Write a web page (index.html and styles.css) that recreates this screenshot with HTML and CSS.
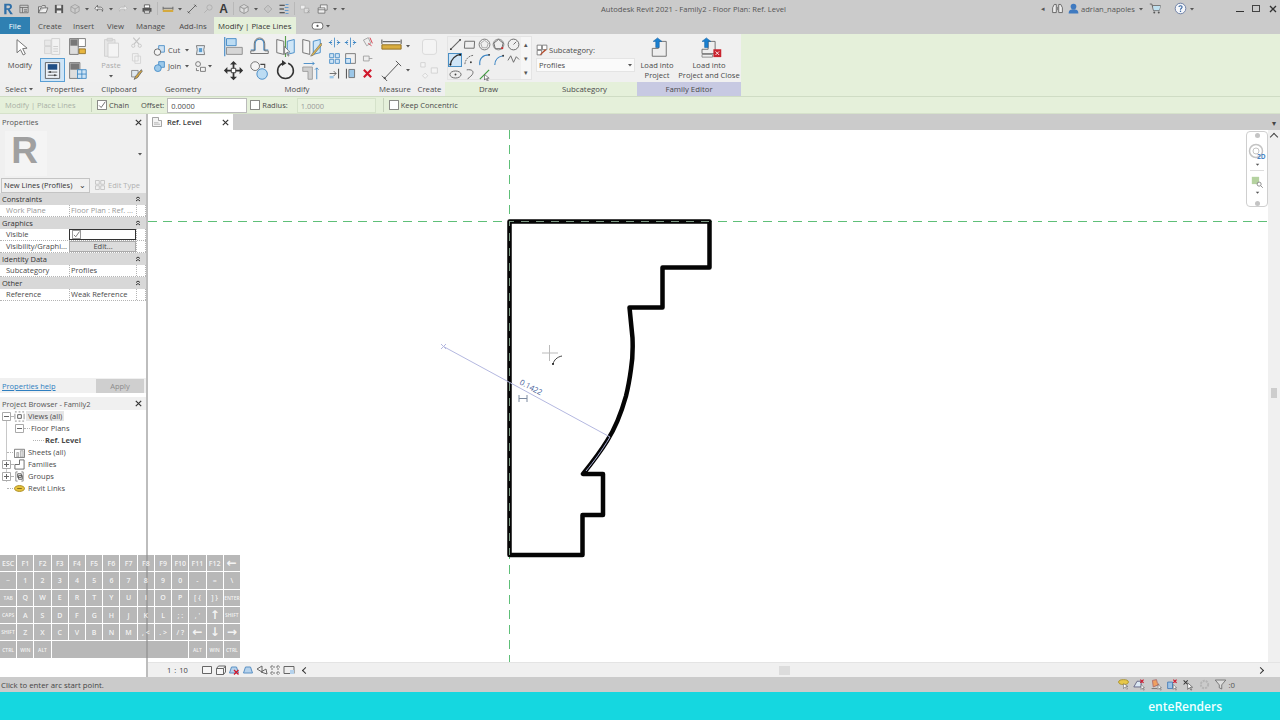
FILE: index.html
```html
<!DOCTYPE html>
<html lang="en">
<head>
<meta charset="utf-8">
<title>Autodesk Revit 2021 - Family2 - Floor Plan: Ref. Level</title>
<link rel="stylesheet" href="styles.css">
</head>
<body>
<svg class="sprite" aria-hidden="true">
  <symbol id="dd" viewBox="0 0 8 8"><path d="M2 3h4L4 5.500z" fill="#555"/></symbol>
  <symbol id="rlogo" viewBox="0 0 16 16"><path d="M3 1h6.500c5 0 5 7 .7 7.600L14.500 15h-3.400L7.500 9H6v6H3z M6 3.400V7h3c2.200 0 2.200-3.600 0-3.600z" fill="#2f6fa8" fill-rule="evenodd"/></symbol>
  <symbol id="info" viewBox="0 0 16 16"><path d="M2.500 3h11v10h-11z M2.500 6h11 M6 6v7 M8 9h4 M8 11h4" fill="none" stroke="#666"/></symbol>
  <symbol id="open" viewBox="0 0 16 16"><path d="M2 13V5h4l1-1.500h4V6 M2 13h10l2.500-6.500H5L2 13z" fill="#eee" stroke="#555"/></symbol>
  <symbol id="save" viewBox="0 0 16 16"><path d="M2.500 2.500h11v11h-11z" fill="#555"/><path d="M5 3h6v4H5z M5 10h6v3.500H5z" fill="#e8e8e8"/></symbol>
  <symbol id="cube" viewBox="0 0 16 16"><path d="M8 2l5.500 3v6L8 14l-5.500-3V5z M2.500 5L8 8l5.500-3 M8 8v6" fill="#ccc" stroke="#999"/></symbol>
  <symbol id="undo" viewBox="0 0 16 16"><path d="M6 3L2.500 7 6 10.500V8.200h4c2 0 2.500 1.300 2.500 3 1.500-3.500-.5-5.700-2.500-5.700H6z" fill="#f4f4f4" stroke="#555"/></symbol>
  <symbol id="redo" viewBox="0 0 16 16"><path d="M10 3l3.500 4-3.500 3.500V8.200H6c-2 0-2.500 1.300-2.500 3C2 7.700 4 5.500 6 5.500h4z" fill="#eee" stroke="#b5b5b5"/></symbol>
  <symbol id="print" viewBox="0 0 16 16"><path d="M4.500 2.500h7v4h-7z M4.500 10.500h7v3h-7z" fill="#fff" stroke="#444"/><path d="M2 6.500h12v5h-2.500v-2h-7v2H2z" fill="#555"/></symbol>
  <symbol id="measure" viewBox="0 0 16 16"><path d="M1.500 5v4 M14.500 5v4 M2 7h12" stroke="#444" fill="none"/><path d="M1 9h14v3H1z" fill="#d4a93e"/></symbol>
  <symbol id="dim" viewBox="0 0 16 16"><path d="M2.500 13.500l11-11" stroke="#444"/><path d="M2 11l3 3 M11 2l3 3" stroke="#444"/></symbol>
  <symbol id="tag" viewBox="0 0 16 16"><circle cx="10" cy="6" r="3.500" fill="none" stroke="#aaa"/><path d="M7.500 8.500L3 13" stroke="#aaa"/></symbol>
  <symbol id="threed" viewBox="0 0 16 16"><path d="M8 2l5.500 3v6L8 14l-5.500-3V5z M2.500 5L8 8l5.500-3 M8 8v6" fill="#dedede" stroke="#8a8a8a"/></symbol>
  <symbol id="section" viewBox="0 0 16 16"><path d="M8 3l5 5-5 5-5-5z" fill="none" stroke="#999"/><path d="M8 5.500v5" stroke="#bbb"/></symbol>
  <symbol id="thin" viewBox="0 0 16 16"><path d="M2 3h7 M2 8h6 M2 13h7" stroke="#333" stroke-width="1.400"/><path d="M10 2h4 M9 6h5 M9 10h5 M10 14h4" stroke="#5a96cf" stroke-width="1.200"/></symbol>
  <symbol id="closehid" viewBox="0 0 16 16"><path d="M2 3h6v5H2z" fill="#eee" stroke="#bbb"/><path d="M7 7h6v6H7z" fill="#ddd" stroke="#aaa"/><path d="M11 10l3 3m0-3l-3 3" stroke="#999"/></symbol>
  <symbol id="switch" viewBox="0 0 16 16"><path d="M4.500 2.500h9v7h-9z" fill="#f2f2f2" stroke="#666"/><path d="M1.500 6.500h9v7h-9z" fill="#eee" stroke="#666"/><path d="M1.500 9h9" stroke="#666"/></symbol>
  <symbol id="binoc" viewBox="0 0 16 16"><path d="M2 13V7l2-4h2.500v10z M14 13V7l-2-4H9.500v10z" fill="#eee" stroke="#555"/><path d="M6.500 6h3v4h-3z" fill="#888"/></symbol>
  <symbol id="user" viewBox="0 0 16 16"><circle cx="8" cy="5.500" r="3.500" fill="#3f7ac0"/><path d="M2 14c0-4 3-5 6-5s6 1 6 5z" fill="#3f7ac0"/></symbol>
  <symbol id="cart" viewBox="0 0 16 16"><path d="M1 2.500h2.500l2 8h7l1.500-6H4.200" fill="none" stroke="#555"/><path d="M5 5h9l-1.400 5H6z" fill="#bfe0ef"/><circle cx="6.500" cy="13" r="1.200" fill="#555"/><circle cx="12" cy="13" r="1.200" fill="#555"/></symbol>
  <symbol id="help" viewBox="0 0 16 16"><circle cx="8" cy="8" r="6.500" fill="#f4f6fa" stroke="#5a6f9a"/><path d="M6 6.200C6.200 4 10 4 10 6.200 10 7.800 8 7.600 8 9.500" fill="none" stroke="#2f5f9e" stroke-width="1.300"/><circle cx="8" cy="11.500" r=".9" fill="#2f5f9e"/></symbol>
  <symbol id="tabicon" viewBox="0 0 16 16"><rect x="1.500" y="4.500" width="13" height="8" rx="3" fill="#fff" stroke="#555"/><circle cx="8" cy="8.500" r="1.300" fill="#555"/></symbol>
  <symbol id="cursor" viewBox="0 0 24 24"><path d="M8 3v15l4-3.500 3 6 2.500-1.200-3-6 5-.5z" fill="#fff" stroke="#666"/></symbol>
  <symbol id="prop1" viewBox="0 0 24 24"><path d="M2 4h8v7H2z M2 12h8v9H2z" fill="#e8e8e8" stroke="#cfcfcf"/><path d="M11 2h10v20H11z" fill="#f2f2f2" stroke="#cbcbcb"/><path d="M13 12h6 M13 15h6 M13 18h6" stroke="#c6c6c6"/></symbol>
  <symbol id="prop2" viewBox="0 0 24 24"><path d="M2 2h11v20H2z" fill="#ddd" stroke="#666"/><path d="M13 2h9v10h-9z" fill="#fff" stroke="#666"/><path d="M3 3h9v8H3z" fill="#777"/><path d="M14 15h8v6h-8z" fill="#e8b63f" stroke="#8a6a20"/></symbol>
  <symbol id="prop3" viewBox="0 0 24 24"><path d="M3 2h18v20H3z" fill="#eef3f8" stroke="#444"/><path d="M6 4h12v7H6z" fill="#1f4f86"/><path d="M6 14h12 M6 18h12" stroke="#444"/><circle cx="9" cy="14" r="1.300" fill="#444"/><circle cx="15" cy="18" r="1.300" fill="#444"/></symbol>
  <symbol id="prop4" viewBox="0 0 24 24"><path d="M2 2h13v20H2z" fill="#ddd" stroke="#666"/><path d="M3 3h11v8H3z" fill="#777"/><path d="M12 11h11v11H12z" fill="#cfe4f5" stroke="#2f7fc0"/><path d="M17.500 11v11 M12 16.500h11" stroke="#2f7fc0"/></symbol>
  <symbol id="paste" viewBox="0 0 24 24"><path d="M4 3h12v19H4z" fill="#e6e6e6" stroke="#cfcfcf"/><path d="M8 7h12v16H8z" fill="#f4f4f4" stroke="#cfcfcf"/><path d="M7 1.500h6v3H7z" fill="#ddd" stroke="#cfcfcf"/></symbol>
  <symbol id="cut" viewBox="0 0 16 16"><path d="M4 2l7 8 M12 2l-7 8" stroke="#c4c4c4" stroke-width="1.500"/><circle cx="4" cy="12" r="2" fill="none" stroke="#c4c4c4"/><circle cx="12" cy="12" r="2" fill="none" stroke="#c4c4c4"/></symbol>
  <symbol id="copy" viewBox="0 0 16 16"><path d="M3 2h7v9H3z M6 5h7v9H6z" fill="#f2f2f2" stroke="#d0d0d0"/></symbol>
  <symbol id="match" viewBox="0 0 16 16"><path d="M2 3h8v8H2z" fill="#dfe8f0" stroke="#777"/><path d="M14 2L7 10l-2 4 4-2 6-8z" fill="#d9a83a" stroke="#666"/></symbol>
  <symbol id="gcut" viewBox="0 0 16 16"><path d="M7 2h7v8H7z" fill="#cfe2f2" stroke="#3e86c4"/><circle cx="5.500" cy="10" r="4" fill="#f4f4f4" stroke="#555"/></symbol>
  <symbol id="gjoin" viewBox="0 0 16 16"><path d="M7 2h7v7H7z" fill="#9cc9ea" stroke="#3e86c4"/><circle cx="6" cy="10" r="4.200" fill="#9cc9ea" stroke="#3e86c4"/></symbol>
  <symbol id="gshape" viewBox="0 0 16 16"><path d="M3 2h10l-1 5 1 6H3l1-6z" fill="#e2edf6" stroke="#666"/><path d="M6 5h4v5H6z" fill="#5d9ed0"/></symbol>
  <symbol id="gsplit" viewBox="0 0 16 16"><circle cx="5" cy="5" r="3" fill="none" stroke="#666"/><path d="M8 9h6v5H8z M3 10v3h3" fill="#f4f4f4" stroke="#666"/></symbol>
  <symbol id="align" viewBox="0 0 24 24"><path d="M2 1v22" stroke="#3e86c4" stroke-width="1.300"/><path d="M4 3h11v8H4z" fill="#bcdcf3" stroke="#3e86c4"/><path d="M4 13h18v8H4z" fill="#d6d6d6" stroke="#888"/></symbol>
  <symbol id="offset" viewBox="0 0 24 24"><path d="M2 16h5V9c0-7 10-7 10 0v7h5" fill="none" stroke="#3e86c4" stroke-width="1.200"/><path d="M2 20h20v-3h-4V9C18 0 6 0 6 9v8H2z" fill="none" stroke="#666"/></symbol>
  <symbol id="mirrorp" viewBox="0 0 24 24"><path d="M12 0v24" stroke="#5aa04a" stroke-width="1.300"/><path d="M2 4l8 2v15l-8-2z" fill="#f4f4f4" stroke="#666"/><path d="M22 4l-8 2v15l8-2z" fill="#cfe6f7" stroke="#3e86c4"/><path d="M11 12v9l2-2 2 4 1-.5-2-4h3z" fill="#fff" stroke="#333" stroke-width=".6"/></symbol>
  <symbol id="mirrord" viewBox="0 0 24 24"><path d="M2 4l8 2v15l-8-2z" fill="#f4f4f4" stroke="#666"/><path d="M22 4l-8 2v15l8-2z" fill="#cfe6f7" stroke="#3e86c4"/><path d="M23 8L13 20l-2 3 3-1 10-12z" fill="#e3b84a" stroke="#666" stroke-width=".7"/></symbol>
  <symbol id="move" viewBox="0 0 24 24"><path d="M12 1l4 4h-3v5h-2V5H8z M12 23l-4-4h3v-5h2v5h3z M1 12l4-4v3h5v2H5v3z M23 12l-4 4v-3h-5v-2h5V8z" fill="#333"/><path d="M9.500 9.500h5v5h-5z" fill="#fff" stroke="#333"/></symbol>
  <symbol id="copyb" viewBox="0 0 24 24"><circle cx="7" cy="7" r="5" fill="#f4f4f4" stroke="#666"/><circle cx="15" cy="16" r="6" fill="#bcdcf3" stroke="#3e86c4"/><path d="M13 5h5v4" fill="none" stroke="#444" stroke-width="1.200"/></symbol>
  <symbol id="rotate" viewBox="0 0 24 24"><path d="M15 3.700A9 9 0 1 1 9 3.700" fill="none" stroke="#333" stroke-width="1.800"/><path d="M8 0l5 3.800-5 3z" fill="#333"/></symbol>
  <symbol id="trim" viewBox="0 0 24 24"><path d="M2 8h11v14h-5V13H2z" fill="#cfcfcf" stroke="#999"/><path d="M3 4h12l-2-2 M15 4l-2 2 M18 22V9l-2 2 M18 9l2 2" fill="none" stroke="#3e86c4"/></symbol>
  <symbol id="split" viewBox="0 0 16 16"><path d="M1 8h4 M11 8h4" stroke="#3e86c4" stroke-width="1.300"/><path d="M5 5L2 8l3 3 M11 5l3 3-3 3 M8 2v12" fill="none" stroke="#3e86c4"/></symbol>
  <symbol id="gridb" viewBox="0 0 16 16"><path d="M2 2h5v5H2z M9 2h5v5H9z M2 9h5v5H2z M9 9h5v5H9z" fill="#cfe4f5" stroke="#3e86c4"/></symbol>
  <symbol id="scale" viewBox="0 0 16 16"><path d="M2 2h12v12H2z" fill="none" stroke="#666"/><path d="M2 8h6v6H2z" fill="#cfe4f5" stroke="#3e86c4"/></symbol>
  <symbol id="pin" viewBox="0 0 16 16"><path d="M3 5l6-3 3 7-5 3z" fill="#eee" stroke="#999"/><path d="M9 9l4 3 M11 2l3 7" stroke="#d02030"/></symbol>
  <symbol id="unpin" viewBox="0 0 16 16"><path d="M3 5h7v6H3z M10 8h4" fill="#eee" stroke="#999"/></symbol>
  <symbol id="xred" viewBox="0 0 16 16"><path d="M3.500 3.500l9 9m0-9l-9 9" stroke="#d0182c" stroke-width="2.600"/></symbol>
  <symbol id="extend" viewBox="0 0 16 16"><path d="M13 2v12" stroke="#555" stroke-width="1.300"/><path d="M2 8h8M7 5l3 3-3 3" fill="none" stroke="#555"/><path d="M2 11h5v3H2z" fill="#9cc7e8"/></symbol>
  <symbol id="extend2" viewBox="0 0 16 16"><path d="M3 2v12" stroke="#555" stroke-width="1.300"/><path d="M6 3h7v10H6z" fill="#9cc7e8" stroke="#666"/></symbol>
  <symbol id="ruler" viewBox="0 0 24 24"><path d="M1 4v5 M23 4v5 M2 6.500h20" stroke="#333" fill="none"/><path d="M1 10h22v5H1z" fill="#d9ad3f" stroke="#8c6a1f"/></symbol>
  <symbol id="aligned" viewBox="0 0 24 24"><path d="M4 21L20 4" stroke="#444"/><path d="M1 18l6 6 M17 1l6 6" stroke="#444"/><path d="M3 22l3-1-2-2z" fill="#444"/></symbol>
  <symbol id="crt1" viewBox="0 0 24 24"><rect x="4" y="4" width="16" height="17" rx="3" fill="#f4f4f4" stroke="#d6d6d6"/></symbol>
  <symbol id="crt2" viewBox="0 0 24 24"><path d="M2 3h5v5H2z M14 9h7v6h-7z M4 18l3-3 3 3-3 3z" fill="#f4f4f4" stroke="#d0d0d0"/></symbol>
  <symbol id="dline" viewBox="0 0 14 14"><path d="M2 12L12 2" stroke="#666" stroke-width="1.100"/><circle cx="2" cy="12" r="1" fill="#333"/><circle cx="12" cy="2" r="1" fill="#333"/></symbol>
  <symbol id="drect" viewBox="0 0 14 14"><path d="M2 3.500h10.500L12 11H1.500z" fill="none" stroke="#666"/></symbol>
  <symbol id="dpoly" viewBox="0 0 14 14"><circle cx="7" cy="7" r="5.800" fill="none" stroke="#777"/><path d="M7 2.500l4 3-1.500 5h-5L3 5.500z" fill="none" stroke="#888" stroke-width=".7"/></symbol>
  <symbol id="dpoly2" viewBox="0 0 14 14"><circle cx="7" cy="7" r="5.800" fill="none" stroke="#888"/><path d="M7 1.500l5 4-1.500 6h-7L2 5.500z" fill="none" stroke="#666"/><circle cx="11" cy="11" r="1.200" fill="#c33"/></symbol>
  <symbol id="dcirc" viewBox="0 0 14 14"><circle cx="7" cy="7" r="5.800" fill="none" stroke="#666"/><path d="M7 7l3-3" stroke="#666"/></symbol>
  <symbol id="darc1" viewBox="0 0 14 14"><path d="M1.500 12.500C2 7 7 2 12.500 1.500" fill="none" stroke="#333" stroke-width="1.200"/><circle cx="1.500" cy="12.500" r="1.100" fill="#111"/><circle cx="12" cy="2" r="1.100" fill="#111"/></symbol>
  <symbol id="darc2" viewBox="0 0 14 14"><path d="M2 12C2.500 7 6 3 11 2.500" fill="none" stroke="#666" stroke-dasharray="2 1"/><circle cx="8.500" cy="10" r="1" fill="#333"/></symbol>
  <symbol id="darc3" viewBox="0 0 14 14"><path d="M2 13C1 6 5 2 12 2" fill="none" stroke="#3e86c4" stroke-width="1.200"/><circle cx="12" cy="2" r="1" fill="#333"/></symbol>
  <symbol id="darc4" viewBox="0 0 14 14"><path d="M3 13C3 7 6 4 12 3" fill="none" stroke="#3e86c4" stroke-width="1.200"/><circle cx="12" cy="3" r="1" fill="#333"/></symbol>
  <symbol id="dspl" viewBox="0 0 14 14"><path d="M1 8l3-5 3 7 3-6 3 3" fill="none" stroke="#666"/></symbol>
  <symbol id="dell" viewBox="0 0 14 14"><ellipse cx="7" cy="7" rx="6" ry="3.800" fill="none" stroke="#666"/><circle cx="7" cy="7" r="1" fill="#444"/></symbol>
  <symbol id="dell2" viewBox="0 0 14 14"><path d="M4 2c6-1 8 2 6 5s-5 4-5 5" fill="none" stroke="#666"/></symbol>
  <symbol id="dpick" viewBox="0 0 14 14"><path d="M2 12L12 2" stroke="#3fa03f" stroke-width="1.300"/><path d="M7 7v6l1.500-1.500L10 14l1-.5-1.500-2.500H12z" fill="#fff" stroke="#333" stroke-width=".6"/></symbol>
  <symbol id="subcat" viewBox="0 0 16 16"><path d="M1.500 1.500h6v6h-6z M8.500 1.500h6v6h-6z M1.500 8.500h6v6h-6z" fill="#fff" stroke="#666"/><path d="M14 8L7 14l-2 1 1-2 6-6z" fill="#b54a2a"/></symbol>
  <symbol id="load" viewBox="0 0 24 24"><path d="M13 5h9v17H6V13h7z" fill="#eee" stroke="#666"/><path d="M7 5l5-4 5 4h-3v7h-4V5z" fill="#1a80d0" stroke="#0d5a9c" stroke-width=".6"/></symbol>
  <symbol id="loadc" viewBox="0 0 32 24"><path d="M15 5h8v14H8v-5h7z" fill="#eee" stroke="#666"/><path d="M8 5l5-4 5 4h-3v7h-4V5z" fill="#1a80d0" stroke="#0d5a9c" stroke-width=".6"/><path d="M8 20h12v3H8z" fill="#eee" stroke="#888"/><path d="M21 14h9v9h-9z" fill="#c9242f"/><path d="M23.500 16.500l4 4m0-4l-4 4" stroke="#fff"/></symbol>
  <symbol id="chk" viewBox="0 0 12 12"><path d="M.5.500h11v11H.5z" fill="#fff" stroke="#666"/><path d="M2.500 6.500l2.500 2.500 5-7" fill="none" stroke="#555"/></symbol>
  <symbol id="box" viewBox="0 0 12 12"><path d="M.5.500h11v11H.5z" fill="#fff" stroke="#666"/></symbol>
  <symbol id="xclose" viewBox="0 0 10 10"><path d="M2 2l6 6m0-6L2 8" stroke="#333" stroke-width="1.300"/></symbol>
  <symbol id="page" viewBox="0 0 16 16"><path d="M2 2h8v4h4v8H2z" fill="#f4f4f4" stroke="#888"/><path d="M4 9h6M4 11h8" stroke="#aaa"/></symbol>
  <symbol id="chev" viewBox="0 0 8 8"><path d="M2 3.500L4 2l2 1.500 M2 6L4 4.500 6 6" fill="none" stroke="#333"/></symbol>
  <symbol id="edittype" viewBox="0 0 16 16"><path d="M2 2h5v5H2z M9 2h5v5H9z M2 9h5v5H2z M9 9h5v5H9z" fill="none" stroke="#bbb"/></symbol>
  <symbol id="minus" viewBox="0 0 9 9"><path d="M.5.500h8v8h-8z" fill="#fff" stroke="#aaa"/><path d="M2 4.500h5" stroke="#666"/></symbol>
  <symbol id="plus" viewBox="0 0 9 9"><path d="M.5.500h8v8h-8z" fill="#fff" stroke="#aaa"/><path d="M2 4.500h5M4.500 2v5" stroke="#666"/></symbol>
  <symbol id="tviews" viewBox="0 0 12 12"><path d="M1 1h2M5 1h2M9 1h2M1 11h2M5 11h2M9 11h2M1 3v6M11 3v6" stroke="#888"/><path d="M4 4h4v4H4z" fill="#fff" stroke="#555"/></symbol>
  <symbol id="tsheet" viewBox="0 0 12 12"><path d="M.5 2.500h11v9H.5z" fill="#fff" stroke="#777"/><path d="M3 6h2v5H3z M7 4h3v7H7z" fill="#ddd" stroke="#888" stroke-width=".6"/></symbol>
  <symbol id="tfam" viewBox="0 0 12 12"><path d="M6 1h5v10H1V6h5z" fill="#fff" stroke="#666"/></symbol>
  <symbol id="tgrp" viewBox="0 0 12 12"><path d="M2 1v10M10 1v10M2 1h2M8 1h2M2 11h2M8 11h2" stroke="#888"/><path d="M4 3h4v4H4z M5 5h4v4H5z" fill="#fff" stroke="#555"/></symbol>
  <symbol id="tlink" viewBox="0 0 12 8"><ellipse cx="6" cy="4" rx="5.500" ry="3.200" fill="#e6c23d" stroke="#a88a20"/><path d="M3.500 4h5" stroke="#7a6318"/></symbol>
  <symbol id="vbox" viewBox="0 0 12 12"><path d="M1.500 2.500h9v7h-9z" fill="#f6f6f6" stroke="#666"/></symbol>
  <symbol id="vcube" viewBox="0 0 12 12"><path d="M1.500 4.500h7v6h-7z M1.500 4.500l2-2.500h7l-2 2.500 M8.500 10.500l2-2.500V2" fill="#f6f6f6" stroke="#666"/></symbol>
  <symbol id="vsun" viewBox="0 0 12 12"><path d="M1.500 9l2-6h5l2 6z" fill="#b5d2ec" stroke="#5a90c4"/><path d="M6 6l4.500 4.500m0-4.500L6 10.500" stroke="#d0182c" stroke-width="1.300"/></symbol>
  <symbol id="vshad" viewBox="0 0 12 12"><path d="M1.500 9l2-6h5l2 6z" fill="#b5d2ec" stroke="#5a90c4"/></symbol>
  <symbol id="vtemp" viewBox="0 0 12 12"><path d="M1 5l5-3v6z M5 8l5-3 1 5z" fill="none" stroke="#666"/></symbol>
  <symbol id="vcrop" viewBox="0 0 12 12"><path d="M1 3h10M1 9h10M3 1v10M9 1v10" stroke="#777" stroke-dasharray="2 1"/></symbol>
  <symbol id="vhide" viewBox="0 0 12 12"><path d="M1 2.500h10v7H1z" fill="#eee" stroke="#666"/><path d="M7 6h4v4H7z" fill="#b5d2ec"/></symbol>
  <symbol id="s1" viewBox="0 0 16 16"><ellipse cx="8" cy="5" rx="6" ry="3" fill="#e7c84a" stroke="#a58a1e"/><path d="M8 7v6l2-2 2 3 1-.6-2-3h2.500z" fill="#fff" stroke="#555" stroke-width=".6"/></symbol>
  <symbol id="s2" viewBox="0 0 16 16"><path d="M1 11l4-7h5v7z" fill="#dbe8f4" stroke="#557"/><path d="M9 2l4 4m0-4L9 6" stroke="#d0182c" stroke-width="1.500"/><path d="M10 8v6l1.500-1.500 1.500 2.500.8-.4-1.500-2.500H14z" fill="#fff" stroke="#333" stroke-width=".5"/></symbol>
  <symbol id="s3" viewBox="0 0 16 16"><path d="M3 3l5-1 1 4 2 2-7 3z" fill="#f0a060" stroke="#a66"/><path d="M2 13h7" stroke="#666"/><path d="M10 8v6l1.500-1.500 1.500 2.500.8-.4-1.500-2.500H14z" fill="#fff" stroke="#333" stroke-width=".5"/></symbol>
  <symbol id="s4" viewBox="0 0 16 16"><path d="M2 5h6v8H2z" fill="#9cc2e6" stroke="#3d78b5"/><path d="M9 2l4 4m0-4L9 6" stroke="#d0182c" stroke-width="1.500"/><path d="M9 8v6l1.500-1.500 1.500 2.500.8-.4-1.500-2.500H13z" fill="#fff" stroke="#333" stroke-width=".5"/></symbol>
  <symbol id="s5" viewBox="0 0 16 16"><path d="M2 3l5 5m0-5L2 8" stroke="#333" stroke-width="1.300"/><path d="M7 6v8l2-2 2 3 1-.6-2-3h3z" fill="#fff" stroke="#333" stroke-width=".7"/></symbol>
  <symbol id="s6" viewBox="0 0 16 16"><circle cx="8" cy="8" r="4.500" fill="none" stroke="#b5b5b5" stroke-width="2.500" stroke-dasharray="2.500 1.200"/></symbol>
  <symbol id="s7" viewBox="0 0 16 16"><path d="M1.500 2.500h13l-5 6v5l-3-1.500v-3.500z" fill="#ddd" stroke="#666"/></symbol>
  <symbol id="wheel" viewBox="0 0 18 18"><circle cx="8" cy="8" r="6.500" fill="none" stroke="#c4c4c4" stroke-width="1.500"/><circle cx="8" cy="8" r="3" fill="none" stroke="#c4c4c4"/><text x="9" y="16" class="navtxt">2D</text></symbol>
  <symbol id="zoomr" viewBox="0 0 16 16"><path d="M1 1h9v9H1z" fill="#b5d2a0"/><circle cx="10" cy="10" r="2.500" fill="#fff" stroke="#777"/><path d="M12 12l2.500 2.500" stroke="#777"/></symbol>
</svg>

<div class="app">
  <header class="titlebar">
    <div class="qat">
      <svg class="q"><use href="#rlogo"/></svg><svg class="q"><use href="#info"/></svg>
      <span class="qs"></span>
      <svg class="q"><use href="#open"/></svg><svg class="q"><use href="#save"/></svg><svg class="q"><use href="#cube"/></svg><svg class="qd"><use href="#dd"/></svg>
      <svg class="q"><use href="#undo"/></svg><svg class="qd"><use href="#dd"/></svg><svg class="q"><use href="#redo"/></svg><svg class="qd"><use href="#dd"/></svg>
      <svg class="q"><use href="#print"/></svg><span class="qsep"></span>
      <svg class="q"><use href="#measure"/></svg><svg class="qd"><use href="#dd"/></svg><svg class="q"><use href="#dim"/></svg><svg class="q"><use href="#tag"/></svg>
      <span class="qa">A</span><span class="qsep"></span>
      <svg class="q"><use href="#threed"/></svg><svg class="qd"><use href="#dd"/></svg><svg class="q"><use href="#section"/></svg><svg class="q"><use href="#thin"/></svg><span class="qsep"></span>
      <svg class="q"><use href="#closehid"/></svg><span class="qs2"></span><svg class="q"><use href="#switch"/></svg><svg class="qd"><use href="#dd"/></svg><svg class="qd"><use href="#dd"/></svg>
    </div>
    <div class="apptitle">Autodesk Revit 2021 - Family2 - Floor Plan: Ref. Level</div>
    <div class="account">
      <span class="tri">◂</span>
      <svg class="a14"><use href="#binoc"/></svg>
      <svg class="a14"><use href="#user"/></svg>
      <span class="uname">adrian_napoles</span>
      <svg class="qd"><use href="#dd"/></svg>
      <svg class="a14 cartgap"><use href="#cart"/></svg>
      <svg class="a14 helpgap"><use href="#help"/></svg>
      <svg class="qd"><use href="#dd"/></svg>
      <div class="winbtns">
        <span class="wb wmin"></span>
        <span class="wb wrest"></span>
        <svg class="wx"><use href="#xclose"/></svg>
      </div>
    </div>
  </header>

  <nav class="tabs">
    <span class="tab file">File</span>
    <span class="tab t-create">Create</span>
    <span class="tab t-insert">Insert</span>
    <span class="tab t-view">View</span>
    <span class="tab t-manage">Manage</span>
    <span class="tab t-addins">Add-Ins</span>
    <span class="tab active">Modify | Place Lines</span>
    <svg class="tabctl"><use href="#tabicon"/></svg><svg class="qd"><use href="#dd"/></svg>
  </nav>

  <section class="ribbon">
    <div class="panel p-select">
      <div class="pbody colc bigcol"><svg class="i24"><use href="#cursor"/></svg><span class="rt">Modify</span></div>
      <div class="plabel">Select <svg class="qd"><use href="#dd"/></svg></div>
    </div>
    <div class="panel p-props">
      <div class="pbody grid22">
        <svg class="i22"><use href="#prop1"/></svg><svg class="i22"><use href="#prop2"/></svg>
        <span class="activeicon"><svg class="i22"><use href="#prop3"/></svg></span><svg class="i22"><use href="#prop4"/></svg>
      </div>
      <div class="plabel">Properties</div>
    </div>
    <div class="panel p-clip">
      <div class="pbody cliprow">
        <div class="colc pastecol bigcol"><svg class="i24"><use href="#paste"/></svg><span class="rt dis">Paste</span><svg class="qd"><use href="#dd"/></svg></div>
        <div class="smallcol"><svg class="i14"><use href="#cut"/></svg><svg class="i14"><use href="#copy"/></svg><svg class="i14"><use href="#match"/></svg></div>
      </div>
      <div class="plabel">Clipboard</div>
    </div>
    <div class="panel p-geom">
      <div class="pbody geomrows">
        <div class="geomrow"><svg class="i14"><use href="#gcut"/></svg><span class="rt gl">Cut</span><svg class="qd"><use href="#dd"/></svg><svg class="i14"><use href="#gshape"/></svg></div>
        <div class="geomrow"><svg class="i14"><use href="#gjoin"/></svg><span class="rt gl">Join</span><svg class="qd"><use href="#dd"/></svg><svg class="i14"><use href="#gsplit"/></svg><svg class="qd"><use href="#dd"/></svg></div>
      </div>
      <div class="plabel">Geometry</div>
    </div>
    <div class="panel p-modify">
      <div class="pbody modrow">
        <div class="modbig">
          <svg class="i24"><use href="#align"/></svg><svg class="i24"><use href="#offset"/></svg><svg class="i24"><use href="#mirrorp"/></svg><svg class="i24"><use href="#mirrord"/></svg>
          <svg class="i24"><use href="#move"/></svg><svg class="i24"><use href="#copyb"/></svg><svg class="i24"><use href="#rotate"/></svg><svg class="i24"><use href="#trim"/></svg>
        </div>
        <div class="modsmall">
          <svg class="i14"><use href="#split"/></svg><svg class="i14"><use href="#split"/></svg><svg class="i14"><use href="#pin"/></svg>
          <svg class="i14"><use href="#gridb"/></svg><svg class="i14"><use href="#scale"/></svg><svg class="i14"><use href="#unpin"/></svg>
          <svg class="i14"><use href="#extend"/></svg><svg class="i14"><use href="#extend2"/></svg><svg class="i14"><use href="#xred"/></svg>
        </div>
      </div>
      <div class="plabel">Modify</div>
    </div>
    <div class="panel p-measure">
      <div class="pbody measgrid"><svg class="i24"><use href="#ruler"/></svg><svg class="qd"><use href="#dd"/></svg><svg class="i24"><use href="#aligned"/></svg><svg class="qd"><use href="#dd"/></svg></div>
      <div class="plabel">Measure</div>
    </div>
    <div class="panel p-create">
      <div class="pbody colc creategap"><svg class="i24"><use href="#crt1"/></svg><svg class="i24"><use href="#crt2"/></svg></div>
      <div class="plabel">Create</div>
    </div>
    <div class="panel p-draw">
      <div class="pbody drawbody">
        <div class="drawbox">
          <div class="drawgrid">
            <svg class="i13"><use href="#dline"/></svg><svg class="i13"><use href="#drect"/></svg><svg class="i13"><use href="#dpoly"/></svg><svg class="i13"><use href="#dpoly2"/></svg><svg class="i13"><use href="#dcirc"/></svg>
            <span class="drawon"><svg class="i13"><use href="#darc1"/></svg></span><svg class="i13"><use href="#darc2"/></svg><svg class="i13"><use href="#darc3"/></svg><svg class="i13"><use href="#darc4"/></svg><svg class="i13"><use href="#dspl"/></svg>
            <svg class="i13"><use href="#dell"/></svg><svg class="i13"><use href="#dell2"/></svg><svg class="i13"><use href="#dpick"/></svg>
          </div>
          <div class="drawscroll"><span>▴</span><span>▾</span><span>▾</span></div>
        </div>
      </div>
      <div class="plabel green">Draw</div>
    </div>
    <div class="panel p-sub">
      <div class="pbody subbody">
        <div class="subhead"><svg class="i12"><use href="#subcat"/></svg><span class="rt">Subcategory:</span></div>
        <div class="subsel"><span>Profiles</span><svg class="qd"><use href="#dd"/></svg></div>
      </div>
      <div class="plabel green">Subcategory</div>
    </div>
    <div class="panel p-fam">
      <div class="pbody fambody">
        <div class="loadbtn lb1"><svg class="i24"><use href="#load"/></svg><span class="rt">Load into<br>Project</span></div>
        <div class="loadbtn lb2"><svg class="i32"><use href="#loadc"/></svg><span class="rt">Load into<br>Project and Close</span></div>
      </div>
      <div class="plabel lilac">Family Editor</div>
    </div>
  </section>

  <section class="options">
    <span class="opt-mode">Modify | Place Lines</span>
    <span class="opt-sep"></span>
    <svg class="ck"><use href="#chk"/></svg><span class="opt-lbl">Chain</span>
    <span class="opt-lbl off">Offset:</span>
    <span class="opt-input">0.0000</span>
    <svg class="ck radck"><use href="#box"/></svg><span class="opt-lbl">Radius:</span>
    <span class="opt-input2">1.0000</span>
    <span class="opt-sep sep2"></span>
    <svg class="ck"><use href="#box"/></svg><span class="opt-lbl">Keep Concentric</span>
  </section>

  <main class="work">
    <aside class="side">
      <div class="phead"><span>Properties</span><svg class="xbtn"><use href="#xclose"/></svg></div>
      <div class="preview"><div class="thumb"><span class="bigr">R</span></div><svg class="qd"><use href="#dd"/></svg></div>
      <div class="typerow">
        <div class="typesel"><span>New Lines (Profiles)</span><span class="carets">⌄</span></div>
        <div class="edittype"><svg class="i12"><use href="#edittype"/></svg><span>Edit Type</span></div>
      </div>
      <div class="ptable">
        <div class="psec"><span>Constraints</span><svg class="i8"><use href="#chev"/></svg></div>
        <div class="prow"><span class="k dimk">Work Plane</span><span class="v dimv">Floor Plan : Ref. ...</span><span class="e"></span></div>
        <div class="psec"><span>Graphics</span><svg class="i8"><use href="#chev"/></svg></div>
        <div class="prow"><span class="k">Visible</span><span class="v focus"><svg class="ck0"><use href="#chk"/></svg></span><span class="e"></span></div>
        <div class="prow"><span class="k">Visibility/Graphi...</span><span class="v editbtn">Edit...</span><span class="e"></span></div>
        <div class="psec"><span>Identity Data</span><svg class="i8"><use href="#chev"/></svg></div>
        <div class="prow"><span class="k">Subcategory</span><span class="v">Profiles</span><span class="e"></span></div>
        <div class="psec"><span>Other</span><svg class="i8"><use href="#chev"/></svg></div>
        <div class="prow"><span class="k">Reference</span><span class="v">Weak Reference</span><span class="e"></span></div>
      </div>
      <div class="pfoot"><a class="phelp">Properties help</a><span class="apply">Apply</span></div>
      <div class="phead bhead"><span>Project Browser - Family2</span><svg class="xbtn"><use href="#xclose"/></svg></div>
      <ul class="tree">
        <li class="l0"><svg class="tg"><use href="#minus"/></svg><i class="dash"></i><svg class="ti"><use href="#tviews"/></svg><span class="sel">Views (all)</span></li>
        <li class="l1"><svg class="tg"><use href="#minus"/></svg><i class="dash d2"></i><span>Floor Plans</span></li>
        <li class="l2"><i class="dash d3"></i><b>Ref. Level</b></li>
        <li class="l0 nog"><i class="dash d4"></i><svg class="ti"><use href="#tsheet"/></svg><span>Sheets (all)</span></li>
        <li class="l0"><svg class="tg"><use href="#plus"/></svg><i class="dash"></i><svg class="ti"><use href="#tfam"/></svg><span>Families</span></li>
        <li class="l0"><svg class="tg"><use href="#plus"/></svg><i class="dash"></i><svg class="ti"><use href="#tgrp"/></svg><span>Groups</span></li>
        <li class="l0 nog"><i class="dash d4"></i><svg class="ti"><use href="#tlink"/></svg><span>Revit Links</span></li>
      </ul>
    </aside>

    <div class="viewcol">
      <div class="viewtabs">
        <div class="vtab"><svg class="i12"><use href="#page"/></svg><span>Ref. Level</span><svg class="xbtn"><use href="#xclose"/></svg></div>
        <span class="vtabmenu">▾</span>
      </div>
      <div class="canvasrow">
        <div class="canvas">
          <svg class="drawing" viewBox="148 130 1120 532" aria-label="Floor plan drawing">
            <path d="M148 221.500H1268" class="refline"/>
            <path d="M509.500 130V664" class="refline"/>
            <path class="profile" d="M509.500 221.500H709.500V267.500H662.500V307.500H629.500L632.500 338C633 350 632.500 360 631 369C629.500 380 628 388 626 396C621 414 616 427 607 441C599 454 591 464 583 474H603V515H582.500V555H509.500Z"/>
            <path d="M509.500 221V555M509 221.500H710" class="refover"/>
            <path d="M610 437C601 452 594 461 586 471" class="hl"/>
            <path d="M443.500 346.500L610 437" class="con"/>
            <path d="M441 344l5 5m0-5l-5 5" class="con"/>
            <text x="519" y="384" class="dimtxt" transform="rotate(28 519 384)">0.1422</text>
            <path d="M519 395v7M527 395v7M519 398.500h8" class="dimi"/>
            <path d="M549.500 345v16M542 353h16" class="cross"/>
            <path d="M553 364C554 360 557 357 562 356" class="mini"/>
            <circle cx="553" cy="364" r="1" fill="#111"/>
          </svg>
          <div class="navbar">
            <span class="navx"></span>
            <svg class="wheelicon"><use href="#wheel"/></svg>
            <svg class="qd"><use href="#dd"/></svg>
            <span class="navline"></span>
            <svg class="i14"><use href="#zoomr"/></svg>
            <svg class="qd"><use href="#dd"/></svg>
            <span class="navx nb"></span>
          </div>
        </div>
        <div class="vscroll"><span class="vup"></span><span class="vthumb"></span></div>
      </div>
      <div class="viewbar">
        <span class="scale">1 : 10</span>
        <svg class="v12"><use href="#vbox"/></svg><svg class="v12"><use href="#vcube"/></svg><svg class="v12"><use href="#vsun"/></svg><svg class="v12"><use href="#vshad"/></svg><svg class="v12"><use href="#vtemp"/></svg><svg class="v12"><use href="#vcrop"/></svg><svg class="v12"><use href="#vhide"/></svg>
        <span class="chevl"></span>
        <span class="hthumb"></span>
        <span class="chevr"></span>
      </div>
    </div>
  </main>

  <footer class="status">
    <span>Click to enter arc start point.</span>
    <div class="statusicons">
      <svg class="s14"><use href="#s1"/></svg><svg class="s14"><use href="#s2"/></svg><svg class="s14"><use href="#s3"/></svg><svg class="s14"><use href="#s4"/></svg><svg class="s14"><use href="#s5"/></svg><svg class="s14"><use href="#s6"/></svg><svg class="s14"><use href="#s7"/></svg><span class="fcount">:0</span>
    </div>
  </footer>
  <div class="brand"><span>enteRenders</span></div>

  <div class="keyboard">
    <span>ESC</span><span>F1</span><span>F2</span><span>F3</span><span>F4</span><span>F5</span><span>F6</span><span>F7</span><span>F8</span><span>F9</span><span>F10</span><span>F11</span><span>F12</span><span class="big">←</span>
    <span>~</span><span>1</span><span>2</span><span>3</span><span>4</span><span>5</span><span>6</span><span>7</span><span>8</span><span>9</span><span>0</span><span>-</span><span>=</span><span>\</span>
    <span class="tiny">TAB</span><span>Q</span><span>W</span><span>E</span><span>R</span><span>T</span><span>Y</span><span>U</span><span>I</span><span>O</span><span>P</span><span>[ {</span><span>] }</span><span class="tiny">ENTER</span>
    <span class="tiny">CAPS</span><span>A</span><span>S</span><span>D</span><span>F</span><span>G</span><span>H</span><span>J</span><span>K</span><span>L</span><span>; :</span><span>, '</span><span class="big">↑</span><span class="tiny">SHIFT</span>
    <span class="tiny">SHIFT</span><span>Z</span><span>X</span><span>C</span><span>V</span><span>B</span><span>N</span><span>M</span><span>, &lt;</span><span>. &gt;</span><span>/ ?</span><span class="big">←</span><span class="big">↓</span><span class="big">→</span>
    <span class="tiny">CTRL</span><span class="tiny">WIN</span><span class="tiny">ALT</span><span class="space"></span><span class="tiny">ALT</span><span class="tiny">WIN</span><span class="tiny">CTRL</span>
  </div>
</div>
</body>
</html>
```
FILE: styles.css
```css
* { box-sizing: border-box; }
html, body { margin: 0; padding: 0; }
body { width: 1280px; height: 720px; overflow: hidden; font-family: "Open Sans", "Liberation Sans", sans-serif; font-size: 7.5px; color: #4a4a4a; background: #fff; }
.sprite { display: none; }
svg { display: block; flex: none; }
.app { position: relative; width: 1280px; height: 720px; display: flex; flex-direction: column; }

/* title bar */
.titlebar { height: 17px; background: #cbcbcb; display: flex; align-items: center; }
.qat { display: flex; align-items: center; width: 347px; }
.q { width: 12px; height: 12px; margin: 0 2px; }
.qd { width: 8px; height: 8px; }
.qs { width: 3px; }
.qs2 { width: 2px; }
.qsep { width: 1px; height: 13px; margin: 0 2px; background: #b8b8b8; }
.qa { width: 16px; text-align: center; font: bold 12px "Liberation Sans", sans-serif; color: #3a3a3a; }
.apptitle { margin-left: 254px; font-size: 7.6px; color: #555; white-space: nowrap; }
.account { margin-left: auto; display: flex; align-items: center; color: #555; }
.tri { width: 8px; font-size: 7px; margin-left: 2px; }
.a14 { width: 13px; height: 13px; margin: 0 1.500px; }
.uname { margin-left: 0; width: 56px; font-size: 7.6px; }
.cartgap { margin-left: 4px; }
.helpgap { margin-left: 10px; }
.winbtns { display: flex; align-items: center; gap: 8px; margin-left: 40px; width: 44px; }
.wb { display: block; width: 8px; height: 7px; }
.wmin { border-bottom: 1.500px solid #333; }
.wrest { border: 1px solid #444; }
.wx { width: 10px; height: 10px; }

/* tabs */
.tabs { height: 17px; background: #cbcbcb; display: flex; align-items: stretch; font-size: 7.8px; }
.tab { display: flex; align-items: center; color: #4a4a4a; }
.file { width: 30px; justify-content: center; background: #2f80b2; color: #fff; }
.t-create { margin-left: 8px; }
.t-insert { margin-left: 11px; }
.t-view { margin-left: 13px; }
.t-manage { margin-left: 12px; }
.t-addins { margin-left: 14px; }
.active { margin-left: 7px; width: 82px; justify-content: center; background: #e5f0da; color: #333; }
.tabctl { width: 13px; height: 15px; margin-left: 15px; align-self: center; }
.tabs .qd { align-self: center; }

/* ribbon */
.ribbon { height: 63px; background: #e5f0da; display: flex; border-bottom: 1px solid #cfdcc4; }
.panel { display: flex; flex-direction: column; background: #f0f0f0; }
.pbody { height: 48px; }
.plabel { height: 14px; display: flex; align-items: center; justify-content: center; background: #efefef; color: #4a4a4a; font-size: 7.8px; white-space: nowrap; }
.plabel.green { background: #e5f0da; }
.plabel.lilac { background: #c7c9e2; }
.rt { font-size: 7.6px; line-height: 10px; color: #4a4a4a; text-align: center; white-space: nowrap; }
.dis { color: #aaa; }
.colc { display: flex; flex-direction: column; align-items: center; }
.bigcol { padding-top: 3px; gap: 2px; }
.i24 { width: 21px; height: 21px; }
.i22 { width: 19px; height: 19px; }
.i14 { width: 13px; height: 13px; }
.i13 { width: 13px; height: 13px; }
.i12 { width: 12px; height: 12px; }
.i8 { width: 8px; height: 8px; }
.i32 { width: 28px; height: 21px; }
.p-select { width: 40px; }
.p-props { width: 50px; }
.grid22 { display: grid; grid-template-columns: 25px 25px; grid-template-rows: 24px 24px; place-items: center; }
.activeicon { width: 25px; height: 24px; display: flex; align-items: center; justify-content: center; background: #cfe5f7; border: 1px solid #5a9fd4; }
.p-clip { width: 58px; }
.cliprow { display: flex; padding-left: 8px; }
.pastecol { width: 26px; }
.smallcol { margin-left: 4px; width: 16px; display: flex; flex-direction: column; align-items: center; padding-top: 2px; gap: 3px; }
.p-geom { width: 70px; }
.geomrows { display: flex; flex-direction: column; gap: 2px; padding: 9px 0 0 5px; }
.geomrow { display: flex; align-items: center; height: 14px; }
.gl { width: 16px; margin-left: 2px; text-align: left; }
.geomrow .qd { margin-right: 3px; margin-left: -1px; }
.p-modify { width: 158px; }
.modrow { display: flex; padding-left: 2px; }
.modbig { display: grid; grid-template-columns: repeat(4, 26px); grid-template-rows: 24px 24px; place-items: center; }
.modsmall { margin-left: 2px; display: grid; grid-template-columns: repeat(3, 16.500px); grid-template-rows: repeat(3, 15.500px); place-items: center; padding-top: 1px; }
.p-measure { width: 38px; }
.measgrid { display: grid; grid-template-columns: 26px 8px; grid-template-rows: 24px 24px; place-items: center; padding-left: 2px; }
.p-create { width: 31px; }
.creategap { padding-top: 2px; gap: 3px; }
.p-draw { width: 87px; }
.drawbody { padding: 2px 0 2px 2px; }
.drawbox { height: 44px; display: flex; background: #efefef; border: 1px solid #e4e4e4; }
.drawgrid { width: 73px; display: grid; grid-template-columns: repeat(5, 14.500px); grid-template-rows: repeat(3, 15px); place-items: center; }
.drawon { width: 14px; height: 14px; display: flex; align-items: center; justify-content: center; background: #cfe5f7; border: 1px solid #4a8fc4; }
.drawscroll { flex: 1; display: grid; grid-template-rows: repeat(3, 1fr); place-items: center; font-size: 7px; background: #f6f6f6; color: #555; }
.p-sub { width: 105px; }
.subbody { padding: 9px 1px 0 4px; }
.subhead { display: flex; align-items: center; gap: 1px; height: 14px; }
.subsel { margin-top: 1px; width: 99px; height: 14px; display: flex; align-items: center; justify-content: space-between; padding-left: 2px; background: #fafafa; border: 1px solid #e4e4e4; color: #4a4a4a; }
.p-fam { width: 104px; }
.fambody { display: flex; padding-top: 3px; }
.loadbtn { display: flex; flex-direction: column; align-items: center; gap: 2px; }
.lb1 { width: 40px; }
.lb2 { width: 64px; }

/* options bar */
.options { height: 17px; background: #e5f0da; display: flex; align-items: center; border-bottom: 1px solid #d6e2cb; color: #4a4a4a; }
.opt-mode { width: 91px; padding-left: 5px; color: #aab0a6; white-space: nowrap; }
.opt-sep { width: 1px; height: 14px; background: #c6d2bc; margin-right: 5px; }
.sep2 { margin-left: 7px; }
.ck { width: 10px; height: 10px; margin-right: 2px; }
.off { margin-left: 12px; }
.opt-lbl { white-space: nowrap; }
.opt-input { width: 80px; height: 15px; margin-left: 3px; padding-left: 3px; line-height: 14px; background: #fff; border: 1px solid #bbb; color: #4a4a4a; }
.radck { margin-left: 3px; }
.opt-input2 { width: 79px; height: 15px; margin-left: 9px; padding-left: 3px; line-height: 14px; background: #e8f2de; border: 1px solid #d5e2ca; color: #999; }

/* workspace */
.work { height: 563px; display: flex; }
.side { width: 148px; display: flex; flex-direction: column; background: #fff; border-right: 2px solid #bdbdbd; }
.phead { height: 16px; flex: none; display: flex; align-items: center; justify-content: space-between; padding: 0 3px 0 2px; background: #f0f0f0; color: #555; }
.xbtn { width: 9px; height: 9px; }
.preview { height: 47px; display: flex; align-items: center; justify-content: space-between; padding: 0 2px 0 5px; background: #f0f0f0; }
.thumb { width: 42px; height: 45px; display: flex; justify-content: center; background: #f4f4f4; overflow: hidden; }
.bigr { font: bold 37px/40px "Liberation Sans", sans-serif; color: #a0a0a0; margin-left: -3px; }
.typerow { height: 16px; display: flex; align-items: center; background: #f0f0f0; padding-left: 1px; }
.typesel { width: 89px; height: 15px; display: flex; align-items: center; justify-content: space-between; padding: 0 3px 0 2px; border: 1px solid #c4c4c4; color: #333; background: #f0f0f0; white-space: nowrap; }
.carets { line-height: 6px; }
.edittype { display: flex; align-items: center; gap: 2px; margin-left: 4px; color: #b0b0b0; white-space: nowrap; }
.ptable { display: flex; flex-direction: column; }
.psec { height: 12px; display: flex; align-items: center; justify-content: space-between; padding: 0 4px 0 2px; background: #d8d8d8; color: #333; }
.prow { height: 12px; display: grid; grid-template-columns: 69px 67px 10px; background: #fff; border-bottom: 1px dotted #b4b4b4; }
.prow > span { display: flex; align-items: center; overflow: hidden; white-space: nowrap; padding-bottom: 1px; }
.k { padding-left: 6px; }
.v { padding-left: 1px; border-left: 1px dotted #b4b4b4; }
.e { border-left: 1px dotted #b4b4b4; border-right: 1px dotted #b4b4b4; }
.dimv, .dimk { color: #999; }
.focus { border: 1px solid #333; }
.ck0 { width: 9px; height: 9px; margin-left: 1px; }
.editbtn { justify-content: center; background: #dcdcdc; border: 1px solid #aaa; }
.pfoot { margin-top: 77px; height: 15px; flex: none; display: flex; align-items: center; justify-content: space-between; padding: 0 2px; background: #f0f0f0; }
.phelp { color: #2f7fc0; text-decoration: underline; }
.apply { width: 48px; height: 14px; display: flex; align-items: center; justify-content: center; background: #cfcfcf; color: #8c8c8c; }
.bhead { margin-top: 4px; height: 13px; }
.tree { list-style: none; margin: 0; padding: 0; flex: 1; background: linear-gradient(#c8c8c8, #c8c8c8) 6px 4px / 1px 68px no-repeat; }
.tree li { height: 12px; display: flex; align-items: center; white-space: nowrap; color: #4a4a4a; }
.tg { width: 9px; height: 9px; }
.ti { width: 11px; height: 11px; margin-right: 3px; }
.dash { display: block; width: 2px; border-top: 1px dotted #b4b4b4; margin: 0 1px 0 0; }
.d2 { width: 6px; }
.d3 { width: 11px; margin-left: 33px; }
.d4 { width: 6px; margin-left: 7px; margin-right: 1px; }
.l0 { padding-left: 2px; }
.l0.nog { padding-left: 0; }
.l1 { padding-left: 15px; }
.sel { padding: 0 2px; background: #e6e6e6; margin-left: -2px; }

/* view area */
.viewcol { flex: 1; display: flex; flex-direction: column; min-width: 0; }
.viewtabs { height: 16px; flex: none; display: flex; align-items: center; background: #cbcbcb; }
.vtab { width: 85px; height: 16px; display: flex; align-items: center; gap: 4px; padding: 0 3px; background: #fff; color: #3a3a3a; font-weight: 600; }
.vtab span { flex: 1; }
.vtabmenu { margin-left: auto; width: 12px; font-size: 8px; text-align: center; color: #444; }
.canvasrow { height: 532px; flex: none; display: flex; }
.canvas { flex: 1; position: relative; background: #fff; min-width: 0; }
.drawing { width: 1120px; height: 532px; }
.refline { stroke: #5fbf78; stroke-width: 1; stroke-dasharray: 9 6; fill: none; }
.refover { stroke: #7d9a84; stroke-width: 1; stroke-dasharray: 8 7; stroke-dashoffset: 3; fill: none; }
.profile { fill: none; stroke: #050505; stroke-width: 4.500; stroke-linejoin: round; }
.hl { fill: none; stroke: #aab0d8; stroke-width: 1; }
.con { fill: none; stroke: #b4b8e0; stroke-width: 1; }
.dimtxt { font-family: "Open Sans", sans-serif; font-size: 7.800px; fill: #46609a; }
.dimi { stroke: #7c8aa0; stroke-width: 1; fill: none; }
.cross { stroke: #bbb; stroke-width: 1; fill: none; }
.mini { stroke: #444; stroke-width: 1; fill: none; }
.navbar { position: absolute; right: 0; top: 1px; width: 22px; height: 76px; display: flex; flex-direction: column; align-items: center; background: #fff; border: 1px solid #cfcfcf; border-radius: 4px; }
.navbar .qd { height: 7px; width: 7px; }
.wheelicon { width: 18px; height: 18px; }
.navtxt { font: bold 6.500px "Open Sans", sans-serif; fill: #4a86c4; }
.navx { width: 5px; height: 5px; margin: 1px 0 5px; border-radius: 50%; background: #c4c4c4; }
.nb { margin: 5px 0 0; }
.navline { width: 14px; height: 1px; margin: 2px 0 5px; background: #ddd; }
.vscroll { width: 12px; background: #f0f0f0; display: flex; flex-direction: column; align-items: center; padding-top: 4px; }
.vup { width: 6px; height: 6px; border-left: 1px solid #444; border-top: 1px solid #444; transform: rotate(45deg); }
.vthumb { width: 6px; height: 10px; margin-top: 248px; background: #cdcdcd; }
.viewbar { height: 15px; flex: none; display: flex; align-items: center; background: #f0f0f0; border-top: 1px solid #e4e4e4; }
.scale { margin-left: 19px; width: 34px; color: #444; word-spacing: 1px; white-space: nowrap; }
.v12 { width: 12px; height: 12px; margin-right: 1.700px; }
.chevl, .chevr { display: block; width: 5px; height: 5px; border-left: 1px solid #333; border-bottom: 1px solid #333; transform: rotate(45deg); margin-left: 6px; }
.hthumb { width: 11px; height: 9px; margin-left: 471px; background: #dcdcdc; }
.chevr { transform: rotate(225deg); margin-left: 468px; }

/* status */
.status { height: 15px; flex: none; display: flex; align-items: center; justify-content: space-between; padding-left: 1px; background: #cbcbcb; color: #444; font-size: 7.800px; }
.statusicons { display: flex; align-items: center; gap: 3.200px; margin-right: 45px; }
.s14 { width: 13px; height: 13px; }
.fcount { margin-left: -2px; color: #555; }
.brand { height: 28px; flex: none; display: flex; align-items: center; justify-content: flex-end; padding-right: 58px; background: #15d7e0; color: #f2ffff; font: 600 12px "Open Sans", sans-serif; }

/* on-screen keyboard overlay */
.keyboard { position: absolute; left: 0; top: 555px; width: 240px; display: grid; grid-template-columns: repeat(14, 1fr); grid-auto-rows: 16.300px; gap: 1px; }
.keyboard span { display: flex; align-items: center; justify-content: center; overflow: hidden; background: rgba(140, 140, 140, .62); color: rgba(255, 255, 255, .85); font: 600 7px "Open Sans", sans-serif; }
.keyboard .tiny { font-size: 5px; }
.keyboard .big { font: bold 12px "DejaVu Sans", sans-serif; }
.keyboard .space { grid-column: span 8; }
```
